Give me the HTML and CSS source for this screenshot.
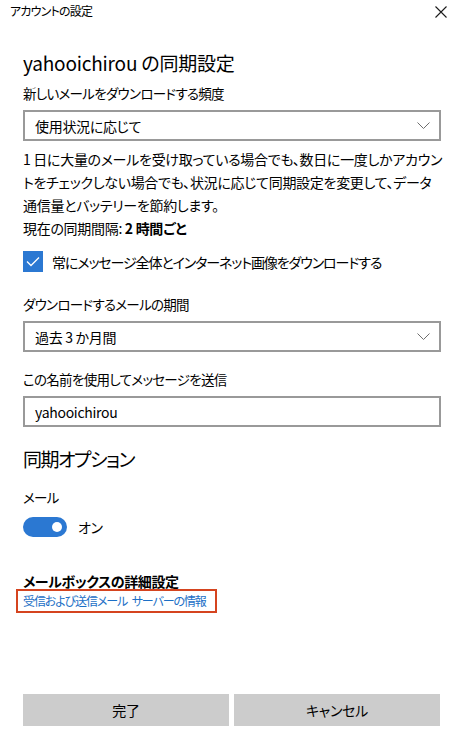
FILE: index.html
```html
<!DOCTYPE html>
<html lang="ja">
<head>
<meta charset="utf-8">
<title>アカウントの設定</title>
<link rel="stylesheet" href="styles.css">
</head>
<body>
<div class="dialog">
  <div class="titlebar">
    <span class="title">アカウントの設定</span>
    <svg class="close" width="12" height="12" viewBox="0 0 12 12" aria-label="閉じる">
      <path d="M0.5 0.5 L11.5 11.5 M11.5 0.5 L0.5 11.5" stroke="#1a1a1a" stroke-width="1.1" fill="none"/>
    </svg>
  </div>
  <div class="content">
    <h1 class="heading">yahooichirou の同期設定</h1>
    <div class="label">新しいメールをダウンロードする頻度</div>
    <div class="select">
      <span>使用状況に応じて</span>
      <svg class="chev" width="13" height="7" viewBox="0 0 13 7"><path d="M0.5 0.5 L6.5 6.5 L12.5 0.5" stroke="#6e6e6e" stroke-width="1" fill="none"/></svg>
    </div>
    <p class="para">1 日に大量のメールを受け取っている場合でも、数日に一度しかアカウン<br>トをチェックしない場合でも、状況に応じて同期設定を変更して、データ<br>通信量とバッテリーを節約します。</p>
    <div class="current">現在の同期間隔: <b>2 時間ごと</b></div>
    <div class="check-row">
      <span class="checkbox">
        <svg width="20" height="21" viewBox="0 0 20 21"><path d="M4 10.5 L8 14.5 L16 6.5" stroke="#fff" stroke-width="1.3" fill="none"/></svg>
      </span>
      <span class="check-text">常にメッセージ全体とインターネット画像をダウンロードする</span>
    </div>
    <div class="label l2">ダウンロードするメールの期間</div>
    <div class="select">
      <span>過去 3 か月間</span>
      <svg class="chev" width="13" height="7" viewBox="0 0 13 7"><path d="M0.5 0.5 L6.5 6.5 L12.5 0.5" stroke="#6e6e6e" stroke-width="1" fill="none"/></svg>
    </div>
    <div class="label l3">この名前を使用してメッセージを送信</div>
    <div class="input">yahooichirou</div>
    <h2 class="heading h2">同期オプション</h2>
    <div class="label l4">メール</div>
    <div class="toggle-row">
      <span class="toggle"><span class="knob"></span></span>
      <span>オン</span>
    </div>
    <div class="adv">メールボックスの詳細設定</div>
    <div class="mark"><a class="link" href="#">受信および送信メール サーバーの情報</a></div>
  </div>
  <div class="buttons">
    <button class="btn">完了</button>
    <button class="btn">キャンセル</button>
  </div>
</div>
</body>
</html>
```

FILE: styles.css
```css
* { box-sizing: border-box; }
html, body { margin: 0; padding: 0; background: #fff; }
body {
  font-family: "Noto Sans CJK JP", "Noto Sans", sans-serif;
  font-feature-settings: "palt";
  color: #000;
  font-size: 14px;
  letter-spacing: -0.3px;
}
.dialog {
  display: flex;
  flex-direction: column;
  height: 735px;
}
.titlebar {
  display: flex;
  justify-content: space-between;
  align-items: center;
  height: 22px;
  padding: 0 16px 0 10px;
}
.title { font-size: 12px; line-height: 22px; letter-spacing: -0.8px; }
.close { margin-top: 2px; }
.content {
  padding: 0 22px 0 23px;
  display: flex;
  flex-direction: column;
}
.heading {
  margin: 27px 0 0;
  font-size: 19px;
  font-weight: normal;
  line-height: 28px;
  letter-spacing: -0.2px;
}
.label {
  margin-top: 6px;
  line-height: 20px;
  font-size: 13.5px;
  letter-spacing: -0.7px;
}
.select, .input {
  height: 31px;
  border: 2px solid #999;
  margin-top: 7px;
  padding: 0 9px 0 10px;
  display: flex;
  align-items: center;
  justify-content: space-between;
  line-height: 20px;
}
.para { margin: 7px 0 0; line-height: 23px; white-space: nowrap; }
.current { line-height: 23px; }
.current b { font-weight: bold; }
.check-row {
  margin-top: 11px;
  display: flex;
  align-items: center;
  gap: 9px;
  height: 21px;
}
.check-text { letter-spacing: -1.1px; }
.checkbox {
  width: 20px;
  height: 21px;
  background: #2b78d2;
  display: flex;
}
.l2 { margin-top: 22px; }
.l3 { margin-top: 17px; }
.h2 { margin-top: 18px; letter-spacing: -1.5px; }
.l4 { margin-top: 14px; }
.toggle-row {
  margin-top: 10px;
  display: flex;
  align-items: center;
  gap: 11px;
  height: 20px;
}
.toggle {
  width: 44px;
  height: 20px;
  border-radius: 10px;
  background: #2b78d2;
  display: flex;
  align-items: center;
  justify-content: flex-end;
  padding-right: 5px;
}
.knob {
  width: 10px;
  height: 10px;
  border-radius: 50%;
  background: #fff;
}
.adv {
  margin-top: 34px;
  font-weight: bold;
  font-size: 14px;
  line-height: 20px;
  letter-spacing: -0.4px;
}
.mark {
  align-self: flex-start;
  margin: -2px 0 0 -7px;
  border: 2px solid #d5441f;
  padding: 0 9px 0 5px;
}
.link {
  display: block;
  color: #1c6fc6;
  text-decoration: none;
  line-height: 20px;
  font-size: 12px;
  letter-spacing: -1.1px;
  word-spacing: 3px;
}
.buttons {
  margin-top: auto;
  margin-bottom: 9px;
  padding: 0 23px 0 23px;
  display: grid;
  grid-template-columns: 1fr 1fr;
  gap: 5px;
}
.btn {
  height: 32px;
  border: none;
  background: #cccccc;
  font-family: inherit;
  font-feature-settings: "palt";
  font-size: 14px;
  letter-spacing: -0.3px;
  color: #000;
  padding: 0;
}
```
